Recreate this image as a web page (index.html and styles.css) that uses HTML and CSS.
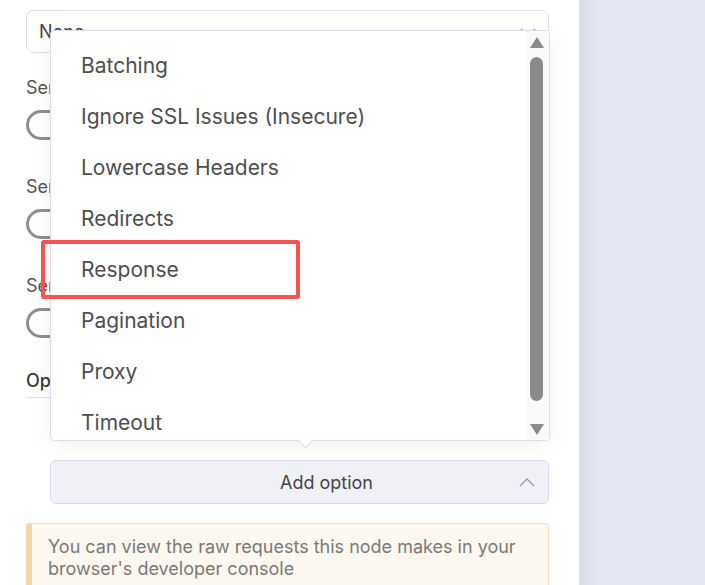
FILE: index.html
```html
<!DOCTYPE html>
<html>
<head>
<meta charset="utf-8">
<link rel="stylesheet" href="styles.css">
</head>
<body>
<div class="page">
  <div class="panel">
    <div class="select">
      <span class="select-value">None</span>
      <svg class="select-chev" width="16" height="10" viewBox="0 0 16 10"><path d="M1 1 L8 8 L15 1" fill="none" stroke="#999" stroke-width="1.4"/></svg>
    </div>
    <div class="field">
      <div class="label">Send Query Parameters</div>
      <div class="switch"><span class="knob"></span></div>
    </div>
    <div class="field">
      <div class="label">Send Headers</div>
      <div class="switch"><span class="knob"></span></div>
    </div>
    <div class="field">
      <div class="label">Send Body</div>
      <div class="switch"><span class="knob"></span></div>
    </div>
    <div class="options-title">Options</div>
    <div class="options-body">
      <div class="add-option">
        <span>Add option</span>
        <svg class="add-chev" width="16" height="10" viewBox="0 0 16 10"><path d="M1 9 L8 2 L15 9" fill="none" stroke="#9a9ca5" stroke-width="1.3"/></svg>
      </div>
      <div class="dropdown">
        <ul class="list">
          <li>Batching</li>
          <li>Ignore SSL Issues (Insecure)</li>
          <li>Lowercase Headers</li>
          <li>Redirects</li>
          <li>Response</li>
          <li>Pagination</li>
          <li>Proxy</li>
          <li>Timeout</li>
        </ul>
        <div class="scrollbar">
          <span class="sb-up"></span>
          <span class="sb-thumb"></span>
          <span class="sb-down"></span>
        </div>
        <span class="arrow"></span>
      </div>
      <div class="highlight"></div>
    </div>
    <div class="notice">You can view the raw requests this node makes in your browser's developer console</div>
  </div>
  <div class="side"></div>
</div>
</body>
</html>
```

FILE: styles.css
```css
* { box-sizing: border-box; }
html, body { margin: 0; padding: 0; }
body {
  font-family: Inter, "Noto Sans", sans-serif;
  background: #fff;
  width: 705px;
  height: 585px;
  overflow: hidden;
}
.page {
  display: flex;
  height: 585px;
}
.panel {
  width: 579px;
  background: #fff;
  padding: 10px 30px 0 26px;
  position: relative;
}
.side {
  flex: 1;
  background: linear-gradient(to right, #dadeeb 0px, #e4e8f2 22px, #e4e8f2 100%);
}
.select {
  height: 43px;
  border: 1px solid #dcdfe8;
  border-radius: 7px;
  display: flex;
  align-items: center;
  padding: 0 12px;
  position: relative;
  background: #fff;
}
.select-value {
  font-size: 18px;
  color: #444;
}
.select-chev {
  position: absolute;
  right: 12px;
  top: 17px;
}
.field {
  margin-top: 24px;
}
.field + .field { margin-top: 36px; }
.label {
  font-size: 18px;
  color: #555;
  line-height: 22px;
}
.switch {
  margin-top: 11px;
  width: 58px;
  height: 30px;
  border: 3px solid #8e8f95;
  border-radius: 15px;
  position: relative;
}
.options-title {
  margin-top: 32px;
  font-size: 18px;
  font-weight: 500;
  color: #3a3a3a;
  line-height: 22px;
  padding-bottom: 5px;
  border-bottom: 1px solid #dcdfe6;
}
.options-body {
  position: relative;
  padding: 62px 0 0 24px;
}
.add-option {
  height: 44px;
  background: #f0f1f7;
  border: 1px solid #d9dce8;
  border-radius: 6px;
  display: flex;
  align-items: center;
  justify-content: center;
  padding-left: 54px;
  font-size: 18px;
  color: #444;
  position: relative;
}
.add-chev {
  position: absolute;
  right: 13px;
  top: 16px;
}
.dropdown {
  position: absolute;
  left: 24px;
  top: -368px;
  width: 500px;
  height: 411px;
  background: #fff;
  border: 1px solid #dcdde8;
  border-radius: 4px;
  box-shadow: 0 4px 22px rgba(0, 0, 0, 0.06);
  display: flex;
  z-index: 2;
}
.list {
  list-style: none;
  margin: 0;
  padding: 9px 0 0 0;
  flex: 1;
  overflow: hidden;
}
.list li {
  height: 51px;
  line-height: 51px;
  padding-left: 30px;
  font-size: 21px;
  color: #4e4e4e;
  white-space: nowrap;
}
.scrollbar {
  width: 23px;
  background: #fafafa;
  position: relative;
}
.sb-up {
  position: absolute;
  left: 4px;
  top: 6px;
  width: 0;
  height: 0;
  border-left: 7px solid transparent;
  border-right: 7px solid transparent;
  border-bottom: 11px solid #8a8a8a;
}
.sb-thumb {
  position: absolute;
  left: 4px;
  top: 26px;
  width: 13px;
  height: 344px;
  background: #8a8a8a;
  border-radius: 7px;
}
.sb-down {
  position: absolute;
  left: 4px;
  top: 393px;
  width: 0;
  height: 0;
  border-left: 7px solid transparent;
  border-right: 7px solid transparent;
  border-top: 11px solid #8a8a8a;
}
.arrow {
  position: absolute;
  left: 249px;
  bottom: -6px;
  width: 11px;
  height: 11px;
  background: #fff;
  border-right: 1px solid #dcdde8;
  border-bottom: 1px solid #dcdde8;
  transform: rotate(45deg);
}
.highlight {
  position: absolute;
  left: 15px;
  top: -158px;
  width: 259px;
  height: 59px;
  border: 4.5px solid #f55252;
  border-radius: 3px;
  z-index: 3;
}
.notice {
  margin-top: 19px;
  background: #fcf7ef;
  border: 1px solid #f5e1b8;
  border-left: 6px solid #f2d6a6;
  border-radius: 4px 4px 0 0;
  padding: 12px 16px 12px 16px;
  font-size: 18px;
  line-height: 22px;
  color: #7a7a7a;
}
```
